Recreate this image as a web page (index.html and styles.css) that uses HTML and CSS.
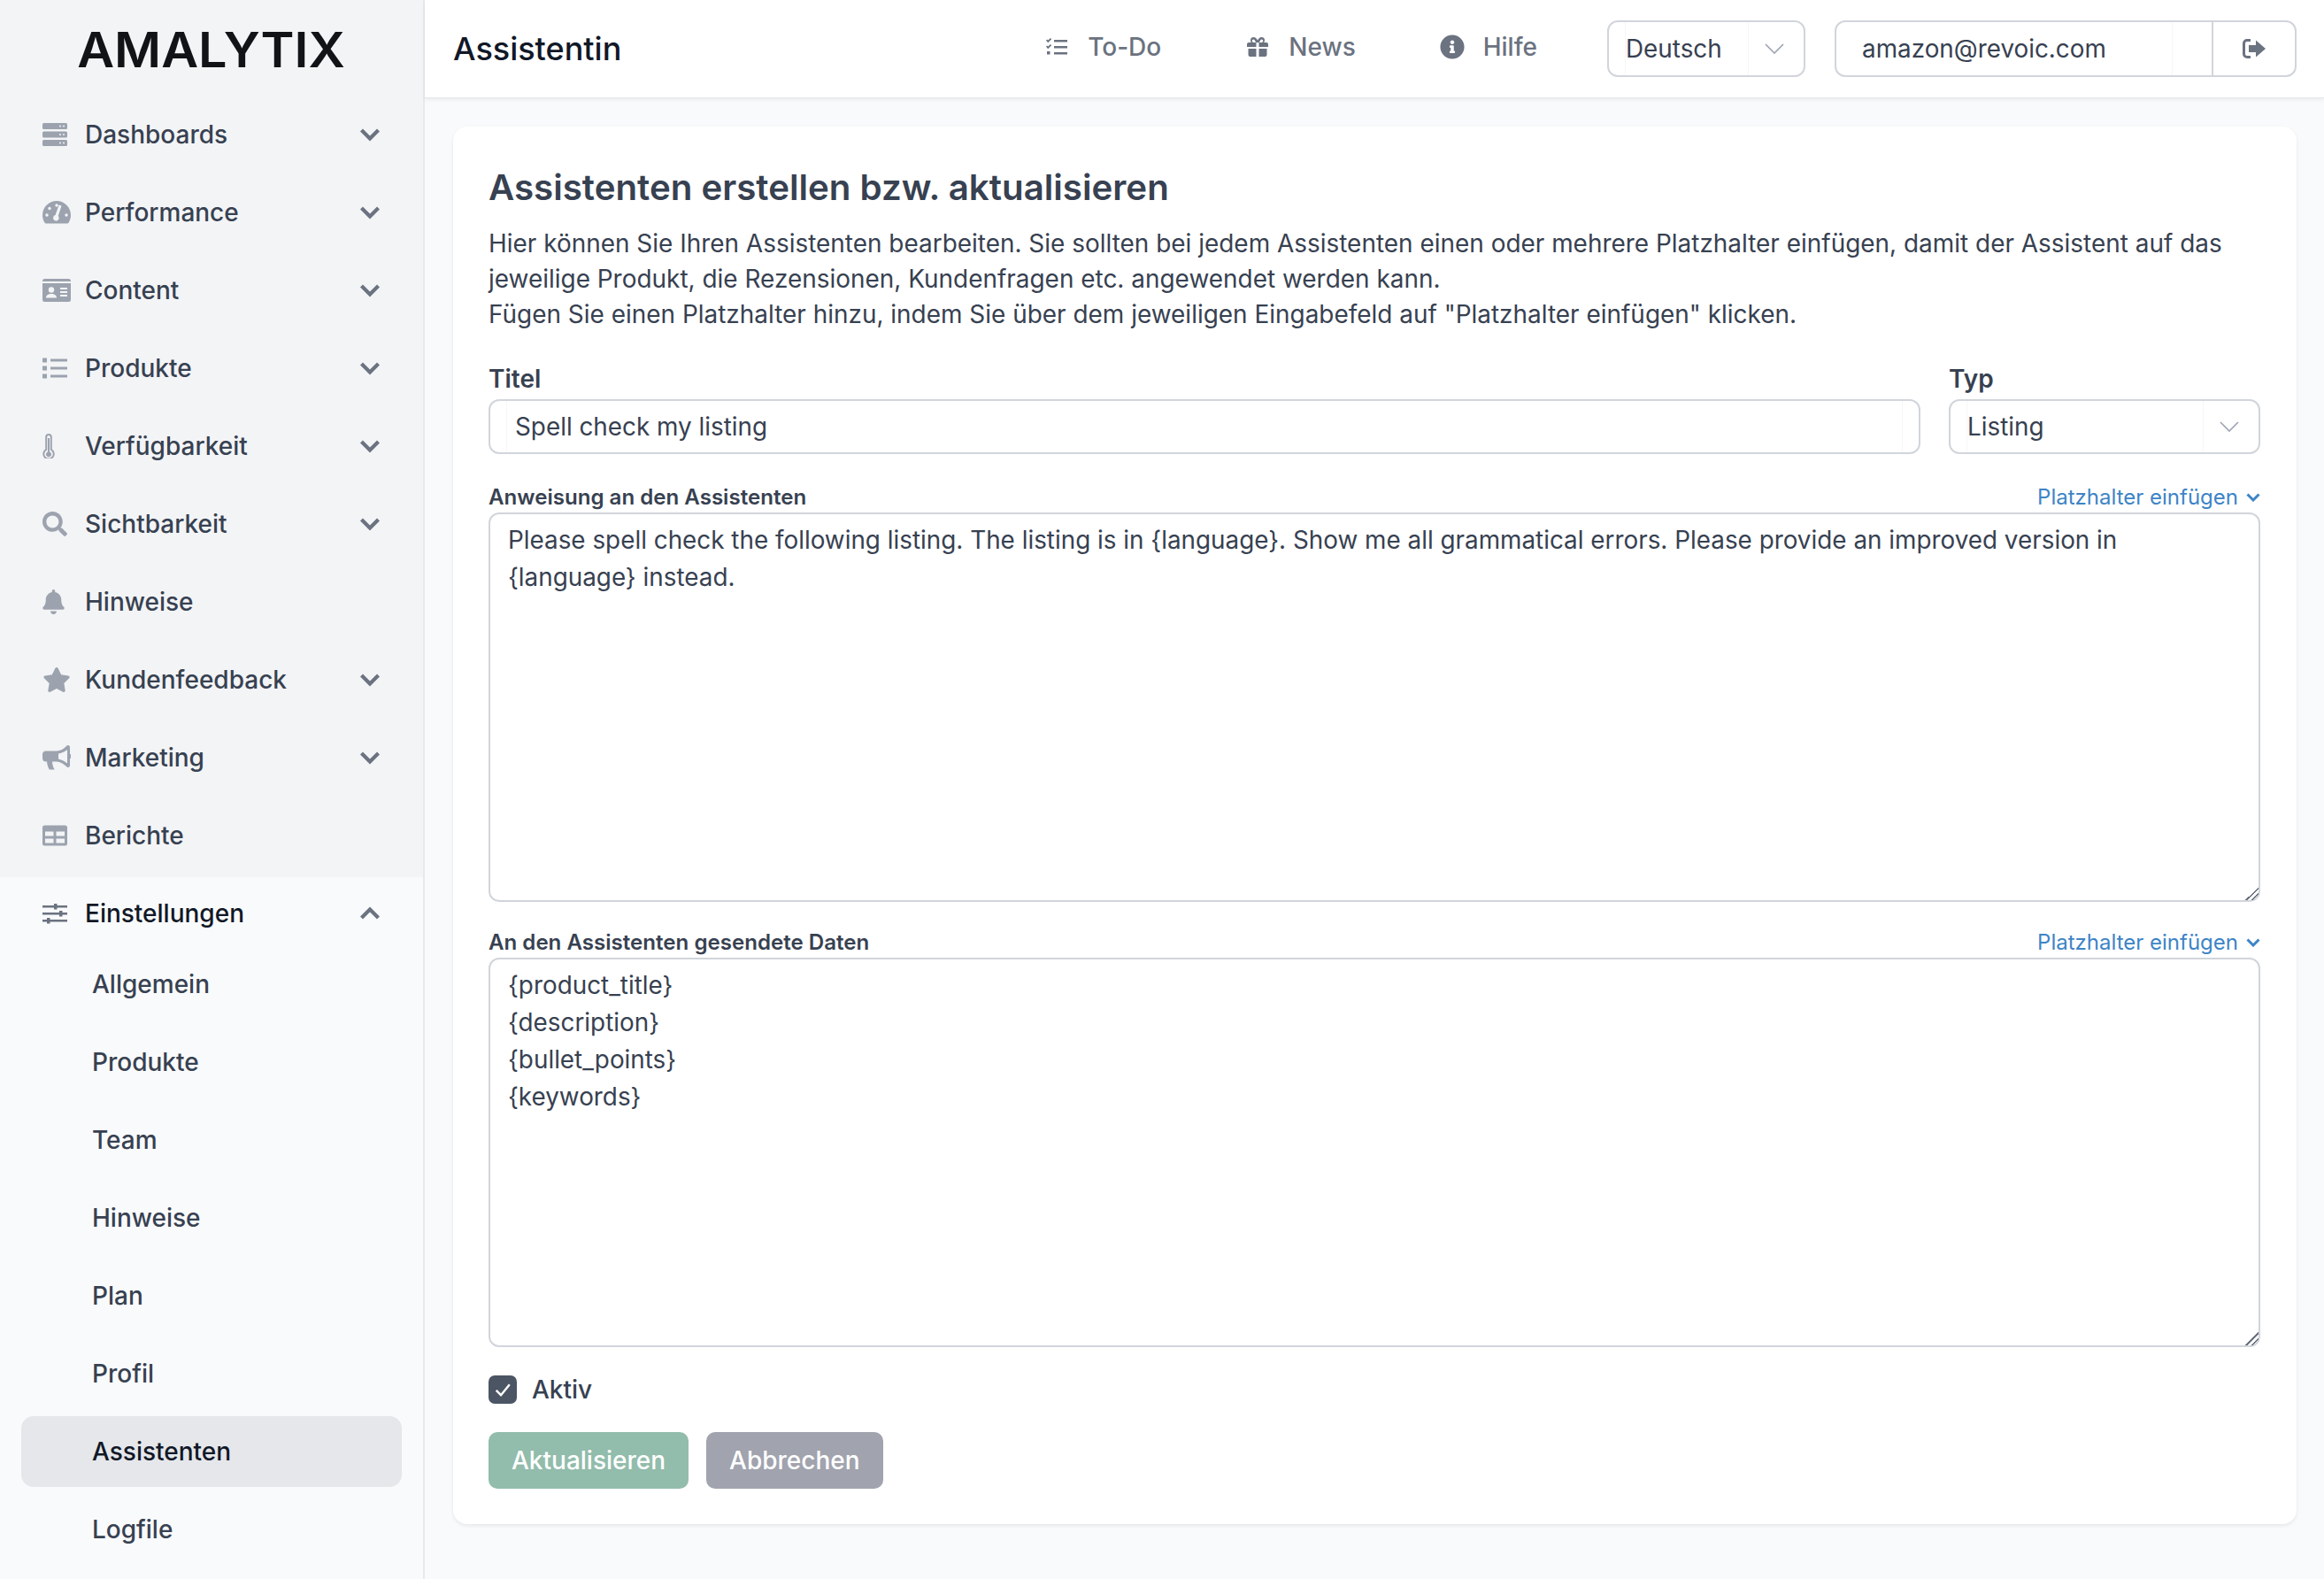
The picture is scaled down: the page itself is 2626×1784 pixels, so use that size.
FILE: index.html
```html
<!DOCTYPE html>
<html lang="de">
<head>
    <meta charset="UTF-8">
    <title>Assistentin</title>
    <link rel="stylesheet" href="styles.css">
</head>
<body>
    <aside class="sidebar">
        <div class="logo"><span class="logo-text">AMALYTIX</span></div>
        <nav class="nav">
            <a class="nav-item">
                <svg class="nav-icon" viewBox="0 0 28 26"><rect y="0" width="28" height="7" rx="1.5"/><rect y="9.500" width="28" height="7" rx="1.500"/><rect y="19" width="28" height="7" rx="1.500"/><g class="cut"><circle cx="20" cy="3.500" r="1"/><circle cx="24" cy="3.500" r="1"/><circle cx="20" cy="13" r="1"/><circle cx="24" cy="13" r="1"/><circle cx="20" cy="22.500" r="1"/><circle cx="24" cy="22.500" r="1"/></g></svg>
                <span class="nav-label">Dashboards</span>
                <svg class="chevron" viewBox="0 0 24 16"><path d="M2.500 3 12 12.500 21.500 3"/></svg>
            </a>
            <a class="nav-item">
                <svg class="nav-icon nav-icon-wide" viewBox="0 0 32 26"><path d="M16 0C7.200 0 0 7.200 0 16c0 3 .8 5.800 2.200 8.200.5.900 1.300 1.300 2.200 1.300h23.200c.9 0 1.700-.4 2.200-1.300C31.200 21.800 32 19 32 16 32 7.200 24.800 0 16 0z"/><g class="cut"><circle cx="16" cy="5" r="1.700"/><circle cx="8" cy="8.500" r="1.700"/><circle cx="5" cy="16" r="1.700"/><circle cx="27" cy="16" r="1.700"/><path d="M21.500 5.500 17.800 17a3.300 3.300 0 1 1-3.200-1L18.600 4.600z"/></g></svg>
                <span class="nav-label">Performance</span>
                <svg class="chevron" viewBox="0 0 24 16"><path d="M2.500 3 12 12.500 21.500 3"/></svg>
            </a>
            <a class="nav-item">
                <svg class="nav-icon nav-icon-wide" viewBox="0 0 32 26"><path d="M0 2.500A2.500 2.500 0 0 1 2.500 0h27A2.500 2.500 0 0 1 32 2.500V3H0zM0 5h32v18.500a2.500 2.500 0 0 1-2.500 2.500h-27A2.500 2.500 0 0 1 0 23.500z"/><g class="cut"><circle cx="10" cy="12.500" r="3.200"/><path d="M4 21.500c0-3 2.500-4.500 6-4.500s6 1.500 6 4.500zM20 10h8v2h-8zM20 14h8v2h-8zM20 18h8v2h-8z"/></g></svg>
                <span class="nav-label">Content</span>
                <svg class="chevron" viewBox="0 0 24 16"><path d="M2.500 3 12 12.500 21.500 3"/></svg>
            </a>
            <a class="nav-item">
                <svg class="nav-icon" viewBox="0 0 28 23"><path d="M0 0h5v5H0zM9 1h19v3H9zM0 9h5v5H0zM9 10h19v3H9zM0 18h5v5H0zM9 19h19v3H9z"/></svg>
                <span class="nav-label">Produkte</span>
                <svg class="chevron" viewBox="0 0 24 16"><path d="M2.500 3 12 12.500 21.500 3"/></svg>
            </a>
            <a class="nav-item">
                <svg class="nav-icon nav-icon-thin" viewBox="0 0 14 28"><path d="M7 0a3.800 3.800 0 0 0-3.800 3.800v13.600a6.700 6.700 0 1 0 7.600 0V3.800A3.800 3.800 0 0 0 7 0zm0 2a1.800 1.800 0 0 1 1.800 1.800v14.700a4.700 4.700 0 1 1-3.600 0V3.800A1.800 1.800 0 0 1 7 2z"/><path d="M6 5h2v15.500a3 3 0 1 1-2 0z"/></svg>
                <span class="nav-label">Verfügbarkeit</span>
                <svg class="chevron" viewBox="0 0 24 16"><path d="M2.500 3 12 12.500 21.500 3"/></svg>
            </a>
            <a class="nav-item">
                <svg class="nav-icon" viewBox="0 0 512 512"><path d="M505 442.700L405.300 343c-4.500-4.500-10.600-7-17-7H372c27.600-35.300 44-79.700 44-128C416 93.100 322.900 0 208 0S0 93.100 0 208s93.100 208 208 208c48.300 0 92.700-16.400 128-44v16.300c0 6.400 2.500 12.500 7 17l99.700 99.700c9.400 9.400 24.600 9.400 33.900 0l28.300-28.300c9.400-9.400 9.400-24.600.1-34zM208 336c-70.700 0-128-57.200-128-128 0-70.700 57.200-128 128-128 70.700 0 128 57.200 128 128 0 70.700-57.200 128-128 128z"/></svg>
                <span class="nav-label">Sichtbarkeit</span>
                <svg class="chevron" viewBox="0 0 24 16"><path d="M2.500 3 12 12.500 21.500 3"/></svg>
            </a>
            <a class="nav-item">
                <svg class="nav-icon nav-icon-bell" viewBox="0 0 448 512"><path d="M224 512c35.320 0 63.970-28.650 63.970-64H160.030c0 35.350 28.650 64 63.970 64zm215.390-149.710c-19.320-20.760-55.470-51.990-55.470-154.290 0-77.700-54.480-139.900-127.940-155.160V32c0-17.670-14.320-32-31.980-32s-31.980 14.330-31.980 32v20.840C118.560 68.100 64.080 130.300 64.080 208c0 102.300-36.150 133.530-55.470 154.290-6 6.450-8.660 14.160-8.610 21.710.11 16.400 12.980 32 32.100 32h383.800c19.120 0 32-15.600 32.100-32 .05-7.550-2.610-15.270-8.610-21.710z"/></svg>
                <span class="nav-label">Hinweise</span>
            </a>
            <a class="nav-item">
                <svg class="nav-icon nav-icon-wide" viewBox="0 0 576 512"><path d="M259.300 17.800L194 150.200 47.900 171.500c-26.200 3.800-36.700 36.100-17.700 54.600l105.700 103-25 145.500c-4.500 26.300 23.200 46 46.400 33.700L288 439.600l130.700 68.700c23.200 12.200 50.900-7.400 46.400-33.700l-25-145.500 105.700-103c19-18.500 8.500-50.800-17.700-54.600L382 150.200 316.700 17.800c-11.700-23.600-45.600-23.900-57.400 0z"/></svg>
                <span class="nav-label">Kundenfeedback</span>
                <svg class="chevron" viewBox="0 0 24 16"><path d="M2.500 3 12 12.500 21.500 3"/></svg>
            </a>
            <a class="nav-item">
                <svg class="nav-icon nav-icon-wide" viewBox="0 0 32 28"><path d="M29 0c-1 0-1.500.5-2 1-3 3-7 5.500-11 5.500H4a4 4 0 0 0-4 4v4a4 4 0 0 0 4 4h1.200c-.2 1 0 2.500.5 4 .6 2 1.500 4 2 5h6c-1-1.500-2.500-4.500-2.700-9H16c4 0 8 2.500 11 5.500.5.500 1 1 2 1s2-1 2-2v-8a2.500 2.500 0 0 0 0-5V2c0-1-1-2-2-2zm-1 5v15.500c-3-2.500-7-4.500-10-5V9.500c3-.5 7-2 10-4.500z"/></svg>
                <span class="nav-label">Marketing</span>
                <svg class="chevron" viewBox="0 0 24 16"><path d="M2.500 3 12 12.500 21.500 3"/></svg>
            </a>
            <a class="nav-item">
                <svg class="nav-icon" viewBox="0 0 28 23"><path d="M2.500 0h23A2.500 2.500 0 0 1 28 2.500v18a2.500 2.500 0 0 1-2.500 2.500h-23A2.500 2.500 0 0 1 0 20.500v-18A2.500 2.500 0 0 1 2.500 0zM3 7v5h9.500V7zm12.500 0v5H25V7zM3 15v5h9.500v-5zm12.500 0v5H25v-5z" fill-rule="evenodd"/></svg>
                <span class="nav-label">Berichte</span>
            </a>
            <div class="nav-section">
                <a class="nav-item nav-item-open">
                    <svg class="nav-icon" viewBox="0 0 28 24"><path d="M0 3h28v2.500H0zM0 11h28v2.500H0zM0 19h28v2.500H0z"/><path d="M13 1h3.500v6.500H13zM19 9h3.500v6.500H19zM5 17h3.500v6.500H5z"/></svg>
                    <span class="nav-label">Einstellungen</span>
                    <svg class="chevron" viewBox="0 0 24 16"><path d="M2.500 13 12 3.500 21.500 13"/></svg>
                </a>
                <a class="sub-item">Allgemein</a>
                <a class="sub-item">Produkte</a>
                <a class="sub-item">Team</a>
                <a class="sub-item">Hinweise</a>
                <a class="sub-item">Plan</a>
                <a class="sub-item">Profil</a>
                <a class="sub-item sub-item-active">Assistenten</a>
                <a class="sub-item">Logfile</a>
            </div>
        </nav>
    </aside>

    <div class="page">
        <header class="topbar">
            <div class="page-title">Assistentin</div>
            <a class="top-link top-link-todo">
                <svg class="top-icon" viewBox="0 0 24 20"><path d="M0 2.800 1.200 1.600l1 1L5 0l1.200 1.200-4 4zM0 9.800l1.200-1.200 1 1L5 7l1.200 1.200-4 4zM1 15h3.500v3.500H1zM9 2h15v2.400H9zM9 9h15v2.400H9zM9 16h15v2.400H9z"/></svg>
                To-Do
            </a>
            <a class="top-link top-link-news">
                <svg class="top-icon" viewBox="0 0 24 22"><path d="M7.500 0C9.500 0 11 1.600 12 3.500 13 1.600 14.500 0 16.500 0A3.500 3.500 0 0 1 20 3.500c0 .9-.3 1.800-.8 2.500H22a2 2 0 0 1 2 2v3H13.500V6h-3v5H0V8a2 2 0 0 1 2-2h2.800A3.900 3.900 0 0 1 4 3.500 3.500 3.500 0 0 1 7.500 0zm0 2.500a1 1 0 0 0 0 3.500H10C9.300 4 8.400 2.500 7.500 2.500zm9 0c-.9 0-1.800 1.500-2.500 3.500h2.500a1.750 1.750 0 0 0 0-3.500zM1.500 13h9v9h-7a2 2 0 0 1-2-2zm12 0h9v7a2 2 0 0 1-2 2h-7z"/></svg>
                News
            </a>
            <a class="top-link top-link-help">
                <svg class="top-icon top-icon-help" viewBox="0 0 512 512"><path d="M256 8C119.043 8 8 119.083 8 256c0 136.997 111.043 248 248 248s248-111.003 248-248C504 119.083 392.957 8 256 8zm0 110c23.196 0 42 18.804 42 42s-18.804 42-42 42-42-18.804-42-42 18.804-42 42-42zm56 254c0 6.627-5.373 12-12 12h-88c-6.627 0-12-5.373-12-12v-24c0-6.627 5.373-12 12-12h12v-64h-12c-6.627 0-12-5.373-12-12v-24c0-6.627 5.373-12 12-12h64c6.627 0 12 5.373 12 12v100h12c6.627 0 12 5.373 12 12v24z"/></svg>
                Hilfe
            </a>
            <div class="field field-lang">
                <select class="field-control"><option>Deutsch</option></select>
                <svg class="select-arrow" viewBox="0 0 22 12"><path d="M1 1l10 10L21 1"/></svg>
            </div>
            <div class="field field-user">
                <input class="field-control" type="text" value="amazon@revoic.com">
                <button class="logout" type="button">
                    <svg viewBox="0 0 26 22"><path d="M9 0H5a5 5 0 0 0-5 5v12a5 5 0 0 0 5 5h4v-3H5a2 2 0 0 1-2-2V5a2 2 0 0 1 2-2h4zM15 1.500 26 11 15 20.500V15H7V7h8z"/></svg>
                </button>
            </div>
        </header>

        <main class="content">
            <section class="card">
                <h1>Assistenten erstellen bzw. aktualisieren</h1>
                <p class="intro">Hier können Sie Ihren Assistenten bearbeiten. Sie sollten bei jedem Assistenten einen oder mehrere Platzhalter einfügen, damit der Assistent auf das jeweilige Produkt, die Rezensionen, Kundenfragen etc. angewendet werden kann.<br>Fügen Sie einen Platzhalter hinzu, indem Sie über dem jeweiligen Eingabefeld auf "Platzhalter einfügen" klicken.</p>

                <div class="form-row">
                    <div>
                        <label class="form-label">Titel</label>
                        <div class="field field-title">
                            <input class="field-control" type="text" value="Spell check my listing">
                        </div>
                    </div>
                    <div>
                        <label class="form-label">Typ</label>
                        <div class="field field-type">
                            <select class="field-control"><option>Listing</option></select>
                            <svg class="select-arrow" viewBox="0 0 22 12"><path d="M1 1l10 10L21 1"/></svg>
                        </div>
                    </div>
                </div>

                <div class="area-head">
                    <label class="area-label">Anweisung an den Assistenten</label>
                    <a class="insert-link">Platzhalter einfügen
                        <svg viewBox="0 0 16 10"><path d="M1.500 1.500 8 8l6.500-6.500"/></svg>
                    </a>
                </div>
                <textarea class="area">Please spell check the following listing. The listing is in {language}. Show me all grammatical errors. Please provide an improved version in {language} instead.</textarea>

                <div class="area-head area-head-second">
                    <label class="area-label">An den Assistenten gesendete Daten</label>
                    <a class="insert-link">Platzhalter einfügen
                        <svg viewBox="0 0 16 10"><path d="M1.500 1.500 8 8l6.500-6.500"/></svg>
                    </a>
                </div>
                <textarea class="area">{product_title}
{description}
{bullet_points}
{keywords}</textarea>

                <div class="check-row">
                    <span class="check-box">
                        <svg viewBox="0 0 16 16"><path d="M3.500 8.500 6.800 11.800 12.800 4.500"/></svg>
                    </span>
                    <span class="check-label">Aktiv</span>
                </div>

                <div class="actions">
                    <button class="btn btn-save" type="button">Aktualisieren</button>
                    <button class="btn btn-cancel" type="button">Abbrechen</button>
                </div>
            </section>
        </main>
    </div>
</body>
</html>
```

FILE: styles.css
```css
:root {
    --text-color: #374151;
    --text-strong: #111827;
    --icon-color: #9ca3af;
    --border-color: #d1d5db;
    --inner-line: #f6f6f8;
    --link-color: #3d84c6;
}

* {
    box-sizing: border-box;
}

html, body {
    height: 100%;
    margin: 0;
}

body {
    display: flex;
    overflow: hidden;
    font-family: Inter, "Liberation Sans", sans-serif;
    font-size: 28px;
    color: var(--text-color);
    background-color: #f9fafb;
}

/* sidebar */
.sidebar {
    flex: 0 0 480px;
    background-color: #f3f4f6;
    border-right: 2px solid #e8e9ed;
}

.logo {
    height: 108px;
    padding-top: 23px;
    text-align: center;
    font-size: 55px;
    line-height: 66px;
    font-weight: 600;
    color: #111317;
}

.logo-text {
    display: inline-block;
    transform: scaleX(1.047);
}

.nav-item {
    display: flex;
    align-items: center;
    height: 88px;
    padding: 0 48px;
    font-weight: 500;
}

.nav-label {
    flex: 1;
}

.nav-icon {
    width: 28px;
    height: 28px;
    margin-right: 20px;
    fill: var(--icon-color);
}

.nav-icon-wide {
    width: 32px;
    margin-right: 16px;
}

.nav-icon-bell {
    width: 25px;
    margin-right: 23px;
}

.nav-icon-thin {
    width: 14px;
    margin-right: 34px;
}

.nav-icon .cut {
    fill: #f3f4f6;
}

.chevron {
    width: 24px;
    height: 16px;
    fill: none;
    stroke: #6b7280;
    stroke-width: 4.2;
}

.nav-section {
    min-height: 800px;
    margin-top: 3px;
    background-color: #f9fafb;
}

.nav-item-open {
    height: 81px;
    color: var(--text-strong);
}

.nav-item-open .nav-icon {
    fill: #6b7280;
}

.sub-item {
    display: flex;
    align-items: center;
    height: 80px;
    margin: 0 24px 8px;
    padding-left: 80px;
    border-radius: 14px;
    font-weight: 500;
}

.sub-item-active {
    background-color: #e5e7eb;
    color: var(--text-strong);
}

/* top bar */
.page {
    flex: 1;
    min-width: 0;
}

.topbar {
    display: flex;
    align-items: center;
    height: 111px;
    padding: 0 31px 0 32px;
    background-color: #ffffff;
    border-bottom: 1px solid #e5e7eb;
    box-shadow: 0 2px 4px rgba(0, 0, 0, 0.06);
}

.page-title {
    margin-right: auto;
    font-size: 36px;
    font-weight: 500;
    color: var(--text-strong);
}

.top-link {
    display: flex;
    align-items: center;
    gap: 23px;
    margin-right: 97px;
    padding-bottom: 4px;
    font-weight: 500;
    color: #6b7280;
}

.top-link-news {
    margin-right: 95px;
}

.top-link-help {
    gap: 21px;
    margin-right: 79px;
}

.top-icon {
    width: 24px;
    height: 22px;
    fill: #6b7280;
}

.top-icon-help {
    width: 28px;
    height: 28px;
}

.field {
    display: flex;
    align-items: center;
    height: 64px;
    padding-left: 18px;
    background-color: #ffffff;
    border: 2px solid var(--border-color);
    border-radius: 12px;
}

.field-control {
    flex: 1;
    min-width: 0;
    height: 100%;
    padding: 0;
    border: 0;
    border-left: 1px solid var(--inner-line);
    border-right: 1px solid var(--inner-line);
    background: none;
    font: inherit;
    font-size: 27.85px;
    color: var(--text-color);
    appearance: none;
    outline: none;
}

.select-arrow {
    flex: none;
    width: 22px;
    height: 12px;
    margin: 0 22px 0 18px;
    fill: none;
    stroke: #9ca3af;
    stroke-width: 1.6;
}

.field-lang {
    width: 224px;
    margin-right: 33px;
}

.field-user {
    width: 522px;
    padding-left: 29px;
}

.field-user .field-control {
    padding-right: 30px;
    flex: 1;
    border-left: 0;
}

.logout {
    display: flex;
    align-items: center;
    justify-content: center;
    flex: 0 0 94px;
    height: 100%;
    margin-left: 44px;
    padding: 0;
    border: 0;
    border-left: 2px solid var(--border-color);
    background: none;
}

.logout svg {
    width: 26px;
    height: 22px;
    fill: #6b7280;
}

/* content */
.content {
    padding: 32px 31px 0 32px;
}

.card {
    padding: 40px 41px 40px 40px;
    background-color: #ffffff;
    border-radius: 16px;
    box-shadow: 0 2px 4px rgba(0, 0, 0, 0.08);
}

h1 {
    margin: 0;
    font-size: 40.25px;
    line-height: 57px;
    font-weight: 600;
}

.intro {
    margin: 15px 0 0;
    line-height: 40px;
    font-size: 27.95px;
}

.form-row {
    display: grid;
    grid-template-columns: 1fr 352px;
    gap: 32px;
    margin-top: 33px;
}

.form-label {
    display: block;
    margin-bottom: 3px;
    line-height: 40px;
    font-weight: 600;
}

.field-title,
.field-type {
    height: 62px;
}

.field-title {
    padding-left: 18px;
    padding-right: 18px;
}

.field-title .field-control {
    padding-left: 9px;
}

.area-head {
    display: flex;
    justify-content: space-between;
    align-items: center;
    height: 35px;
    margin-top: 31px;
}

.area-head-second {
    margin-top: 28px;
}

.area-label {
    font-size: 24.1px;
    font-weight: 600;
}

.insert-link {
    display: flex;
    align-items: center;
    gap: 9px;
    font-size: 24px;
    color: var(--link-color);
}

.insert-link svg {
    width: 16px;
    height: 10px;
    fill: none;
    stroke: var(--link-color);
    stroke-width: 3;
}

.area {
    display: block;
    width: 100%;
    height: 440px;
    padding: 8px 20px;
    border: 2px solid var(--border-color);
    border-radius: 12px;
    font: inherit;
    font-size: 27.85px;
    line-height: 42px;
    color: var(--text-color);
    outline: none;
}

.area::-webkit-resizer {
    background: linear-gradient(135deg, transparent 50%, #6b7280 50%, #6b7280 57%, transparent 57%, transparent 72%, #6b7280 72%, #6b7280 79%, transparent 79%);
}

.check-row {
    display: flex;
    align-items: center;
    gap: 17px;
    height: 32px;
    margin-top: 32px;
}

.check-box {
    display: flex;
    align-items: center;
    justify-content: center;
    width: 32px;
    height: 32px;
    background-color: #4b5563;
    border-radius: 7px;
}

.check-box svg {
    width: 26px;
    height: 26px;
    fill: none;
    stroke: #ffffff;
    stroke-width: 1.5;
}

.check-label {
    font-weight: 500;
}

.actions {
    display: flex;
    gap: 20px;
    margin-top: 32px;
}

.btn {
    height: 64px;
    padding: 0 26px;
    border: 0;
    border-radius: 10px;
    font: inherit;
    font-weight: 550;
    color: #ffffff;
}

.btn-save {
    background-color: #92bcab;
}

.btn-cancel {
    background-color: #a1a3ae;
}
```
